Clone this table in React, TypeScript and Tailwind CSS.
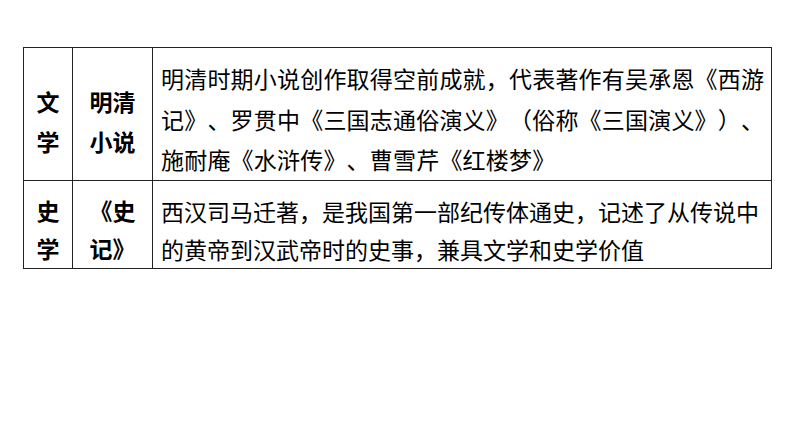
export default function App() {
  const font = { fontFamily: '"Noto Sans CJK SC", "Noto Sans", sans-serif' }

  return (
    <div className="min-h-screen w-full bg-white text-black" style={font}>
      <div className="pl-[23px] pt-[47px]">
        <table className="w-[748px] table-fixed border-collapse border border-[#222] text-[23px] [text-spacing-trim:space-all]">
          <colgroup>
            <col className="w-[49px]" />
            <col className="w-[80px]" />
            <col className="w-[619px]" />
          </colgroup>
          <tbody>
            <tr>
              <td className="border border-[#222] pt-[14px] text-center align-middle font-bold leading-[40px]">
                文<br />学
              </td>
              <td className="border border-[#222] pt-[14px] text-center align-middle font-bold leading-[40px]">
                明清<br />小说
              </td>
              <td className="border border-[#222] pl-[8px] pr-0 pt-[10px] align-top leading-[40.5px] tracking-[0.2px]">
                <div>明清时期小说创作取得空前成就，代表著作有吴承恩《西游</div>
                <div>记》、罗贯中《三国志通俗演义》（俗称《三国演义》）、</div>
                <div>施耐庵《水浒传》、曹雪芹《红楼梦》</div>
              </td>
            </tr>
            <tr>
              <td className="border border-[#222] pt-[10px] text-center align-middle font-bold leading-[38px]">
                史<br />学
              </td>
              <td className="border border-[#222] pt-[10px] text-center align-middle font-bold leading-[38px]">
                《史<br />记》
              </td>
              <td className="border border-[#222] pl-[8px] pr-0 pt-[11px] align-top leading-[38px]">
                <div>西汉司马迁著，是我国第一部纪传体通史，记述了从传说中</div>
                <div>的黄帝到汉武帝时的史事，兼具文学和史学价值</div>
              </td>
            </tr>
          </tbody>
        </table>
      </div>
    </div>
  )
}
